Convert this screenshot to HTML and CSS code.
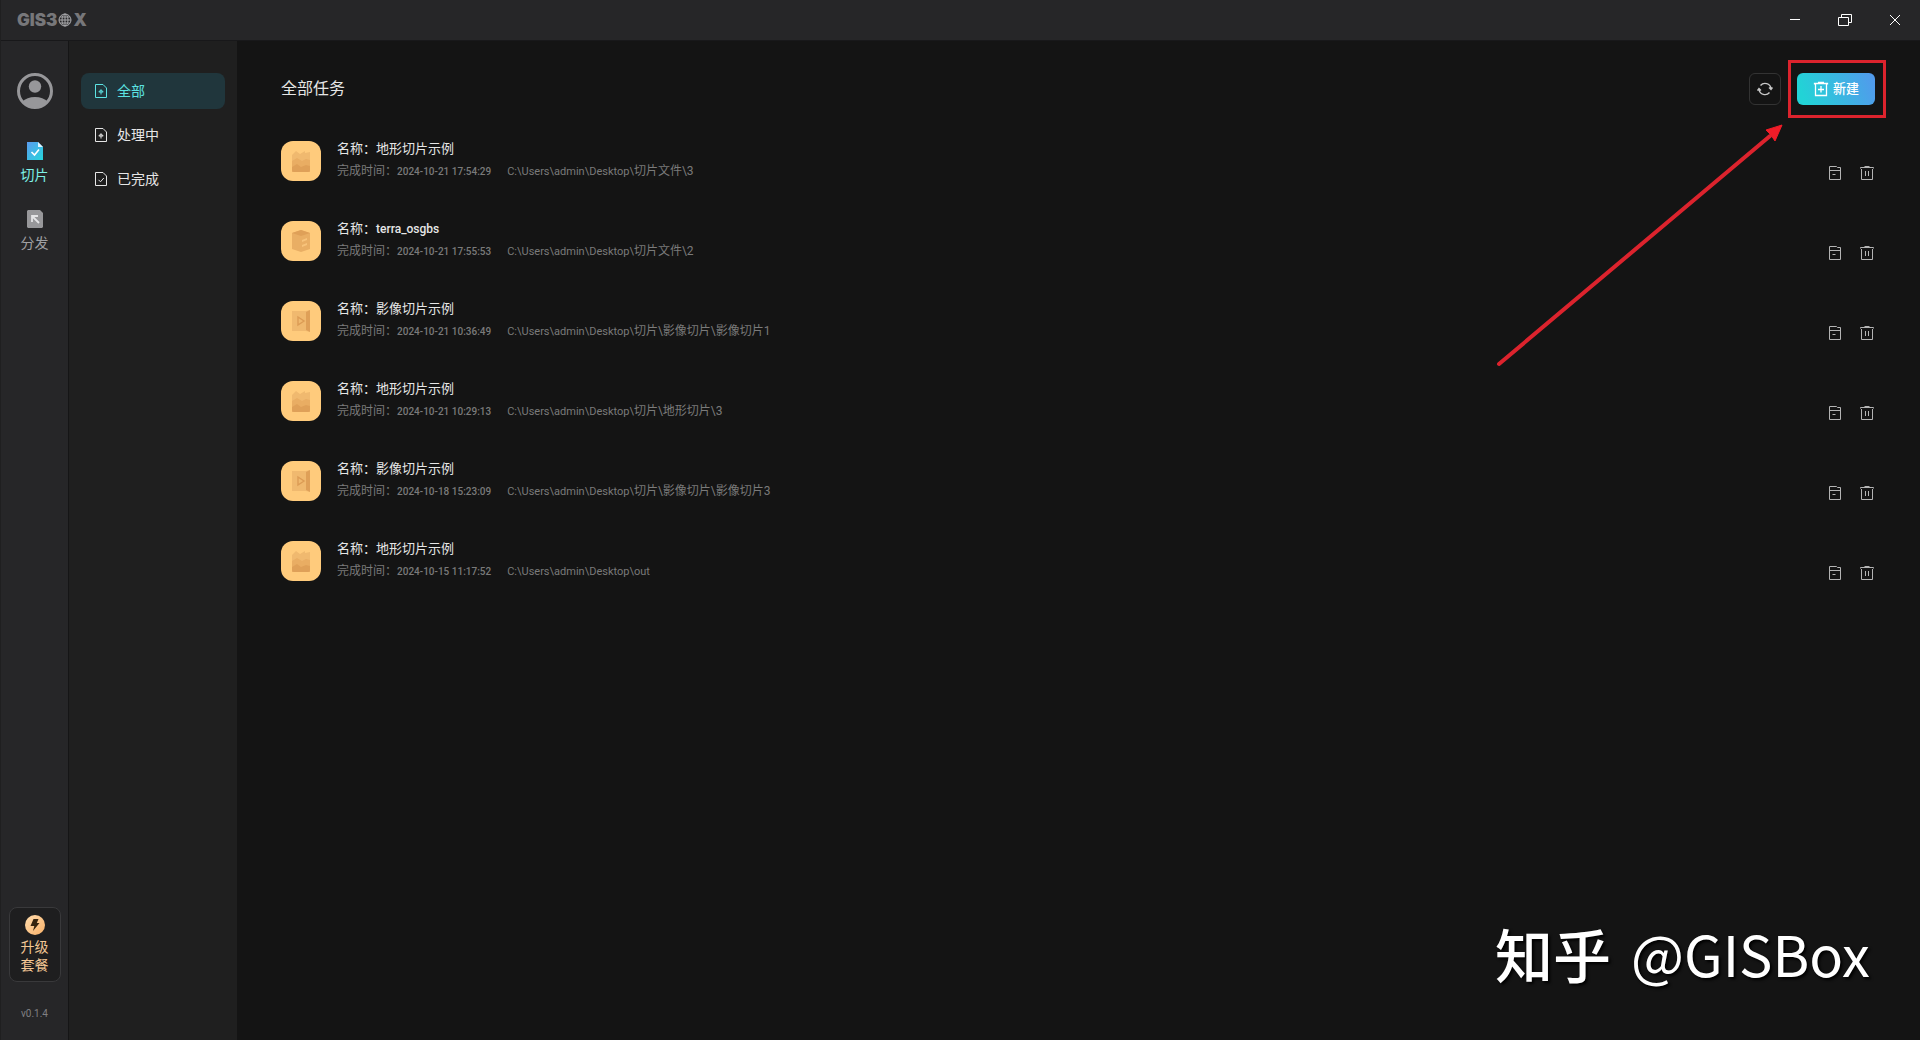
FILE: index.html
```html
<!DOCTYPE html>
<html lang="zh-CN">
<head>
<meta charset="utf-8">
<title>GISBox</title>
<link rel="stylesheet" href="styles.css">
</head>
<body>
<svg class="defs" aria-hidden="true">
  <defs>
    <linearGradient id="blue" x1="0" y1="0" x2="1" y2="1"><stop offset="0" stop-color="#5b9bef"/><stop offset="1" stop-color="#25d6dc"/></linearGradient>
    <linearGradient id="gold" x1="0" y1="0" x2="1" y2="1"><stop offset="0" stop-color="#ffdcae"/><stop offset="1" stop-color="#f9b168"/></linearGradient>
  </defs>
  <symbol id="doc-up" viewBox="0 0 16 16"><path d="M2.5 1.5H10L13.500 5V14.500H2.500ZM8 11.500V7M5.800 9 8 6.600 10.200 9Z"/></symbol>
  <symbol id="doc-check" viewBox="0 0 16 16"><path d="M2.5 1.5H10L13.5 5V14.5H2.5ZM5.5 8.8 7.5 10.8 10.8 7"/></symbol>
  <symbol id="archive" viewBox="0 0 16 16"><path d="M2.5 1.5H9.5L10.5 2.5H13.5V14.5H2.5ZM2.5 5.5H13.5M5.5 9.5H8.5"/></symbol>
  <symbol id="trash" viewBox="0 0 16 16"><path d="M1.5 3.5V2.5H14.5V3.5M5.5 1.5H10.5M2.5 4V14.5H13.5V4M6.5 6V11M9.5 6V11"/></symbol>
  <symbol id="terrain" viewBox="0 0 18 22"><path d="M0 5 4 1 8 4 13 1V3L18 2V20Q18 22 16 22H2Q0 22 0 20Z" fill="#f0b96f"/><path d="M0 11 5 8 10 11 14 9 18 10V22H0Z" fill="#e9ad63"/><path d="M0 17 5 14 9 17 14 15 18 16V20Q18 22 16 22H2Q0 22 0 20Z" fill="#dfa058"/></symbol>
  <symbol id="model" viewBox="0 0 18 22"><path d="M0 3 9 0 18 3V19L9 22 0 19Z" fill="#e9ae64"/><path d="M0 3 9 0 18 3 9 6Z" fill="#dfa058"/><path d="M10 10 15 8V10L10 12ZM10 15 15 13V15L10 17Z" fill="#f8c47b"/></symbol>
  <symbol id="imagery" viewBox="0 0 18 22"><path d="M0 1H14L18 0V22L14 21H0Z" fill="#f0b96f"/><path d="M14 2 18 0V22L14 20Z" fill="#dfa058"/><path d="M6 7V15L12 11Z" fill="none" stroke="#dc9c55" stroke-width="1.4"/></symbol>
</svg>

<div class="app">
  <header class="titlebar">
    <div class="logo" aria-label="GISBOX"><span>GIS3</span><svg viewBox="0 0 14 14"><circle cx="7" cy="7" r="6"/><ellipse cx="7" cy="7" rx="3" ry="6"/><path d="M7 1V13M1 7H13M2 4H12M2 10H12"/></svg><span>X</span></div>
    <div class="window-controls">
      <button aria-label="最小化"><svg viewBox="0 0 16 16"><path d="M3 7.5H13"/></svg></button>
      <button aria-label="还原"><svg viewBox="0 0 16 16"><path d="M1.500 5.500H11.500V13.500H1.500ZM4.500 5V2.500H14.500V10.500H12"/></svg></button>
      <button aria-label="关闭"><svg viewBox="0 0 16 16"><path d="M3 3 13 13M13 3 3 13"/></svg></button>
    </div>
  </header>

  <div class="body">
    <nav class="rail">
      <svg class="avatar" viewBox="0 0 36 36"><circle cx="18" cy="18" r="16.500" fill="none" stroke="#97979a" stroke-width="3"/><circle cx="18" cy="13.500" r="6.200" fill="#97979a"/><path d="M5 29Q10 24 18 24T31 29Q26 35 18 35T5 29Z" fill="#97979a"/></svg>
      <a class="rail-link active" href="#slice"><svg viewBox="0 0 16 18"><path d="M0 0H11L16 5V18H0Z" fill="url(#blue)"/><path d="M11 0 16 5H11Z" fill="#dff4ff"/><path d="M4.500 10 7.500 13 12 7.500" fill="none" stroke="#fff" stroke-width="1.600"/></svg>切片</a>
      <a class="rail-link" href="#publish"><svg viewBox="0 0 16 18"><path d="M1 0H13L16 3V17L15 18H1L0 17V1Z" fill="#97979a"/><path d="M5 12V6H11M5 6 12 13" fill="none" stroke="#e4e4e6" stroke-width="1.800"/></svg>分发</a>
      <button class="upgrade"><svg viewBox="0 0 20 20"><circle cx="10" cy="10" r="10" fill="url(#gold)"/><path d="M8.500 4H13.500L11.800 8H14.500L8 16 9.300 11H5.500Z" fill="#35240f"/></svg><span>升级</span><span>套餐</span></button>
      <span class="version">v0.1.4</span>
    </nav>

    <nav class="filters">
      <a class="filter active" href="#all"><svg class="icon"><use href="#doc-up"/></svg>全部</a>
      <a class="filter" href="#running"><svg class="icon"><use href="#doc-up"/></svg>处理中</a>
      <a class="filter" href="#done"><svg class="icon"><use href="#doc-check"/></svg>已完成</a>
    </nav>

    <main class="main">
      <div class="toolbar">
        <h1>全部任务</h1>
        <button class="refresh" aria-label="刷新"><svg class="icon" viewBox="0 0 16 16"><path d="M3.500 4.500A6 6 0 0 1 14 7.500M12.500 11.500A6 6 0 0 1 2 8.500M0.500 9.500 2 7.500 4 9.500M12 6.500 14 8.500 15.500 6.500" stroke-width="1.400"/></svg></button>
        <div class="create-wrap">
          <button class="create"><svg class="icon" viewBox="0 0 16 16"><path d="M1.500 3.500V2.500H14.500V3.500M5 1.500H11M2.500 3V14.500H13.500V3M8 5V11.500M5 8.500H11" stroke-width="1.300"/></svg>新建</button>
          <svg class="arrow" viewBox="0 0 290 246"><path class="shaft" d="M4 241 275 13"/><path class="head" d="M287 2 280 18 276 12 271 7Z"/></svg>
        </div>
      </div>

      <ul class="tasks">
        <li class="task"><span class="thumb"><svg><use href="#terrain"/></svg></span><div class="info"><div class="name">名称：地形切片示例</div><div class="meta"><span>完成时间：<time>2024-10-21 17:54:29</time></span><span><span class="path">C:\Users\admin\Desktop\</span>切片文件\3</span></div></div><div class="actions"><button aria-label="打开"><svg class="icon"><use href="#archive"/></svg></button><button aria-label="删除"><svg class="icon"><use href="#trash"/></svg></button></div></li>
        <li class="task"><span class="thumb"><svg><use href="#model"/></svg></span><div class="info"><div class="name">名称：<span class="latin">terra_osgbs</span></div><div class="meta"><span>完成时间：<time>2024-10-21 17:55:53</time></span><span><span class="path">C:\Users\admin\Desktop\</span>切片文件\2</span></div></div><div class="actions"><button aria-label="打开"><svg class="icon"><use href="#archive"/></svg></button><button aria-label="删除"><svg class="icon"><use href="#trash"/></svg></button></div></li>
        <li class="task"><span class="thumb"><svg><use href="#imagery"/></svg></span><div class="info"><div class="name">名称：影像切片示例</div><div class="meta"><span>完成时间：<time>2024-10-21 10:36:49</time></span><span><span class="path">C:\Users\admin\Desktop\</span>切片\影像切片\影像切片1</span></div></div><div class="actions"><button aria-label="打开"><svg class="icon"><use href="#archive"/></svg></button><button aria-label="删除"><svg class="icon"><use href="#trash"/></svg></button></div></li>
        <li class="task"><span class="thumb"><svg><use href="#terrain"/></svg></span><div class="info"><div class="name">名称：地形切片示例</div><div class="meta"><span>完成时间：<time>2024-10-21 10:29:13</time></span><span><span class="path">C:\Users\admin\Desktop\</span>切片\地形切片\3</span></div></div><div class="actions"><button aria-label="打开"><svg class="icon"><use href="#archive"/></svg></button><button aria-label="删除"><svg class="icon"><use href="#trash"/></svg></button></div></li>
        <li class="task"><span class="thumb"><svg><use href="#imagery"/></svg></span><div class="info"><div class="name">名称：影像切片示例</div><div class="meta"><span>完成时间：<time>2024-10-18 15:23:09</time></span><span><span class="path">C:\Users\admin\Desktop\</span>切片\影像切片\影像切片3</span></div></div><div class="actions"><button aria-label="打开"><svg class="icon"><use href="#archive"/></svg></button><button aria-label="删除"><svg class="icon"><use href="#trash"/></svg></button></div></li>
        <li class="task"><span class="thumb"><svg><use href="#terrain"/></svg></span><div class="info"><div class="name">名称：地形切片示例</div><div class="meta"><span>完成时间：<time>2024-10-15 11:17:52</time></span><span><span class="path">C:\Users\admin\Desktop\out</span></span></div></div><div class="actions"><button aria-label="打开"><svg class="icon"><use href="#archive"/></svg></button><button aria-label="删除"><svg class="icon"><use href="#trash"/></svg></button></div></li>
      </ul>
    </main>
  </div>
  <div class="watermark"><span class="brand">知乎</span><span>@GISBox</span></div>
</div>
</body>
</html>
```
FILE: styles.css
```css
* { box-sizing: border-box; }

body {
  margin: 0;
  background: #141414;
  color: #e6e6e6;
  font: 14px/20px Roboto, "Noto Sans CJK SC", sans-serif;
}

button {
  margin: 0;
  padding: 0;
  border: 0;
  background: none;
  color: inherit;
  font: inherit;
}

a { color: inherit; text-decoration: none; }
svg { display: block; flex: none; }
.defs { position: absolute; width: 0; height: 0; }
.icon { width: 16px; height: 16px; fill: none; stroke: currentColor; }

.app {
  position: relative;
  display: flex;
  flex-direction: column;
  min-height: 100vh;
  border-left: 1px solid #1f1f20;
}

.titlebar {
  display: flex;
  justify-content: space-between;
  align-items: center;
  height: 41px;
  padding-left: 16px;
  background: #262628;
  border-bottom: 1px solid #18181a;
}

.logo {
  display: flex;
  align-items: center;
  gap: 1px;
  color: #77777a;
  font: 900 17px/20px Inter, sans-serif;
}
.logo svg { width: 14px; height: 14px; fill: none; stroke: #a9a9ac; }

.window-controls { display: flex; color: #fff; }
.window-controls button { display: grid; place-items: center; width: 50px; height: 40px; }
.window-controls svg { width: 16px; height: 16px; fill: none; stroke: currentColor; }

.body { display: flex; flex: 1; }

.rail {
  display: flex;
  flex-direction: column;
  align-items: center;
  width: 68px;
  padding: 32px 0 16px;
  background: #262628;
  border-right: 1px solid #151516;
}
.avatar { width: 36px; height: 36px; margin-bottom: 33px; }
.rail-link {
  display: flex;
  flex-direction: column;
  align-items: center;
  gap: 5px;
  margin-bottom: 25px;
  color: #a0a0a3;
}
.rail-link svg { width: 16px; height: 18px; }
.rail-link.active { color: #7df0e6; }

.upgrade {
  display: flex;
  flex-direction: column;
  align-items: center;
  width: 52px;
  margin-top: auto;
  padding: 7px 0;
  border: 1px solid #39393b;
  border-radius: 8px;
  background: #1e1e1f;
  color: #f3c795;
  line-height: 18px;
}
.upgrade svg { width: 20px; height: 20px; margin-bottom: 3px; }
.version {
  margin-top: 22px;
  color: #808083;
  font-size: 10px;
  line-height: 20px;
}

.filters {
  display: flex;
  flex-direction: column;
  gap: 8px;
  width: 168px;
  padding: 32px 12px;
  background: #1f1f1f;
}
.filter {
  display: flex;
  align-items: center;
  gap: 8px;
  height: 36px;
  padding: 0 12px;
  border-radius: 8px;
}
.filter.active { background: #20363c; color: #5ce3e3; }

.main { flex: 1; padding: 32px 45px 32px 44px; }

.toolbar { display: flex; align-items: center; gap: 16px; }
.toolbar h1 { flex: 1; margin: 0; font-size: 16px; font-weight: 400; line-height: 32px; }
.refresh {
  display: grid;
  place-items: center;
  width: 32px;
  height: 32px;
  border: 1px solid #333;
  border-radius: 6px;
  color: #c8c8c8;
}
.create-wrap { position: relative; }
.create-wrap::after {
  content: "";
  position: absolute;
  inset: -13px -11px -13px -9px;
  border: 3px solid #dc232d;
}
.create {
  display: flex;
  align-items: center;
  justify-content: center;
  gap: 4px;
  width: 78px;
  height: 32px;
  border-radius: 6px;
  background: linear-gradient(70deg, #22d3d6 10%, #519bec 95%);
  color: #fff;
  font-size: 13px;
  font-weight: 500;
}
.arrow {
  position: absolute;
  top: 50px;
  right: 90px;
  width: 290px;
  height: 246px;
}
.shaft { fill: none; stroke: #dc232d; stroke-width: 4px; stroke-linecap: round; }
.head { fill: #f01c28; stroke: #f01c28; stroke-width: 1px; }

.tasks {
  display: flex;
  flex-direction: column;
  gap: 40px;
  margin: 36px 0 0;
  padding: 0;
  list-style: none;
}
.task { display: flex; gap: 16px; height: 40px; }
.thumb {
  display: grid;
  place-items: center;
  width: 40px;
  height: 40px;
  border-radius: 12px;
  background: #ffcb7c;
}
.thumb svg { width: 18px; height: 22px; }
.info { flex: 1; margin-top: -2px; }
.name { font-size: 13px; line-height: 20px; }
.latin { font-size: 12px; font-weight: 500; }
.meta {
  display: flex;
  gap: 16px;
  color: #7a7a7a;
  font-size: 12px;
  line-height: 24px;
}
.meta time { font-size: 10px; font-weight: 500; }
.path { font-size: 11px; }
.actions { display: flex; align-items: flex-end; gap: 16px; color: #b4b4b4; }

.watermark {
  position: absolute;
  right: 50px;
  bottom: 47px;
  display: flex;
  align-items: center;
  gap: 20px;
  color: #fff;
  font: 56px/80px "Noto Sans CJK SC", sans-serif;
  text-shadow: 2px 2px 3px #000;
}
.watermark .brand { font-size: 58px; font-weight: 500; }
```
